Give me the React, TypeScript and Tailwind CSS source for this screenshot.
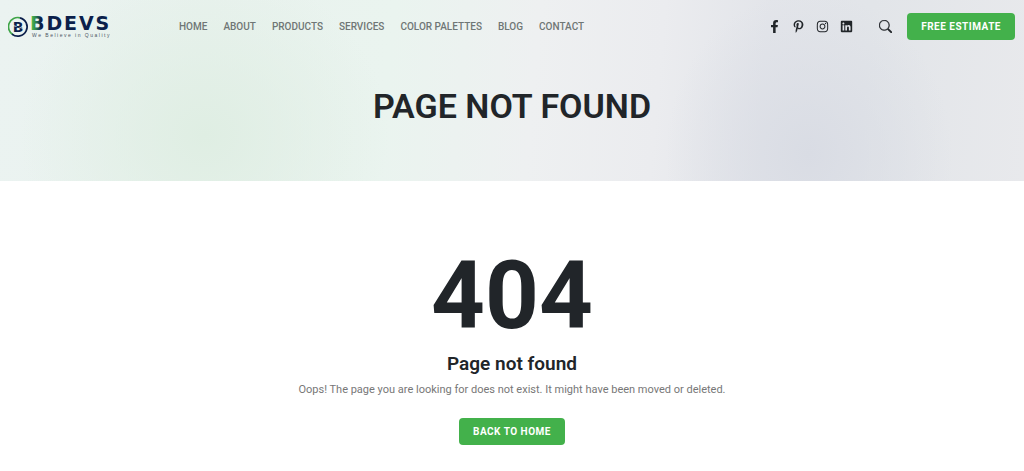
import React from 'react';
import { FaFacebookF, FaInstagram, FaLinkedin, FaPinterestP } from 'react-icons/fa';
import { BsSearch } from 'react-icons/bs';

const navLinks = ['Home', 'About', 'Products', 'Services', 'Color Palettes', 'Blog', 'Contact'];

const socials = [
  { label: 'Facebook', Icon: FaFacebookF },
  { label: 'Pinterest', Icon: FaPinterestP },
  { label: 'Instagram', Icon: FaInstagram },
  { label: 'LinkedIn', Icon: FaLinkedin },
];

function Logo() {
  return (
    <a href="#" aria-label="BDEVS home" className="flex w-[171px] shrink-0 items-center">
      <svg width="108" height="27" viewBox="0 0 108 27">
        <defs>
          <linearGradient id="letter" gradientUnits="userSpaceOnUse" x1="23" x2="38" y1="0" y2="0">
            <stop offset="0.1" stopColor="#45b04a" />
            <stop offset="0.35" stopColor="#2c7a50" />
            <stop offset="0.65" stopColor="#0b1f4b" />
          </linearGradient>
        </defs>
        {/* ring: green left half, navy right half */}
        <path d="M12 4.8A9.3 9.3 0 0 0 5 21.8" fill="none" stroke="#3fa548" strokeWidth="1.7" />
        <path d="M12 4.8A9.3 9.3 0 1 1 4 21.1" fill="none" stroke="#0b1f4b" strokeWidth="1.7" />
        <text x="10" y="19" textAnchor="middle" fontFamily="DejaVu Sans, sans-serif" fontWeight="700" fontSize="14" fill="#0b1f4b">
          B
        </text>
        <path d="M4 12.3l4.5 1.2M11.5 14.4l5 1.4" stroke="#e8f2ef" strokeWidth="0.8" />
        <text x="22" y="17" fontFamily="DejaVu Sans, sans-serif" fontWeight="700" fontSize="19" fill="#0b1f4b" className="tracking-widest">
          <tspan fill="url(#letter)">B</tspan>DEVS
        </text>
        <text x="24" y="24" fontFamily="Liberation Sans, sans-serif" fontSize="5" fill="#4b5563" className="tracking-[1.5px]">
          We Believe in Quality
        </text>
      </svg>
    </a>
  );
}

function Header() {
  return (
    <header className="flex items-center pl-2 pr-[9px] pt-[13px]">
      <Logo />
      <nav className="flex gap-4 text-[10px] font-medium leading-4 text-[#6f7675]">
        {navLinks.map((link) => (
          <a key={link} href="#" className="whitespace-nowrap uppercase hover:text-[#43b14b]">
            {link}
          </a>
        ))}
      </nav>
      <div className="ml-auto flex items-center text-[#212529]">
        <div className="flex gap-[11px]">
          {socials.map(({ label, Icon }) => (
            <a key={label} href="#" aria-label={label}>
              <Icon className="size-[13px]" />
            </a>
          ))}
        </div>
        <button type="button" aria-label="Search" className="ml-[26px] mr-[15px]">
          <BsSearch className="size-[13px]" strokeWidth="0.4" />
        </button>
        <a
          href="#"
          className="rounded bg-[#43b14b] px-[14px] py-[6px] text-[10px] font-bold uppercase leading-[15px] tracking-wider text-white"
        >
          Free Estimate
        </a>
      </div>
    </header>
  );
}

export default function App() {
  return (
    <div className="min-h-screen bg-white font-['Roboto',sans-serif] text-[#212529]">
      <section className="bg-[radial-gradient(ellipse_14%_90%_at_79%_85%,#d9dce4,transparent),radial-gradient(ellipse_18%_95%_at_20%_75%,#dfeee3,transparent),linear-gradient(95deg,#ebf3f1_0%,#e9f2ee_20%,#eaf4ef_38%,#eef0f1_52%,#ebecef_64%,#e3e5ea_74%,#e2e5e9_84%,#e8e9ec_100%)] pb-[53px]">
        <Header />
        <h1 className="mt-[44px] text-center text-[34px] font-semibold uppercase leading-[44px]">Page Not Found</h1>
      </section>
      <main className="flex flex-col items-center px-4 pt-[68px] text-center">
        <h2 className="text-[94px] font-bold leading-[94px]">404</h2>
        <h3 className="mt-[9px] text-[19px] font-semibold leading-6">Page not found</h3>
        <p className="mt-[6px] text-[11px] leading-4 text-[#777]">
          Oops! The page you are looking for does not exist. It might have been moved or deleted.
        </p>
        <a
          href="#"
          className="mt-[20px] rounded bg-[#43b14b] px-[14px] py-[6px] text-[10px] font-bold uppercase leading-[15px] tracking-wider text-white"
        >
          Back to Home
        </a>
      </main>
    </div>
  );
}
